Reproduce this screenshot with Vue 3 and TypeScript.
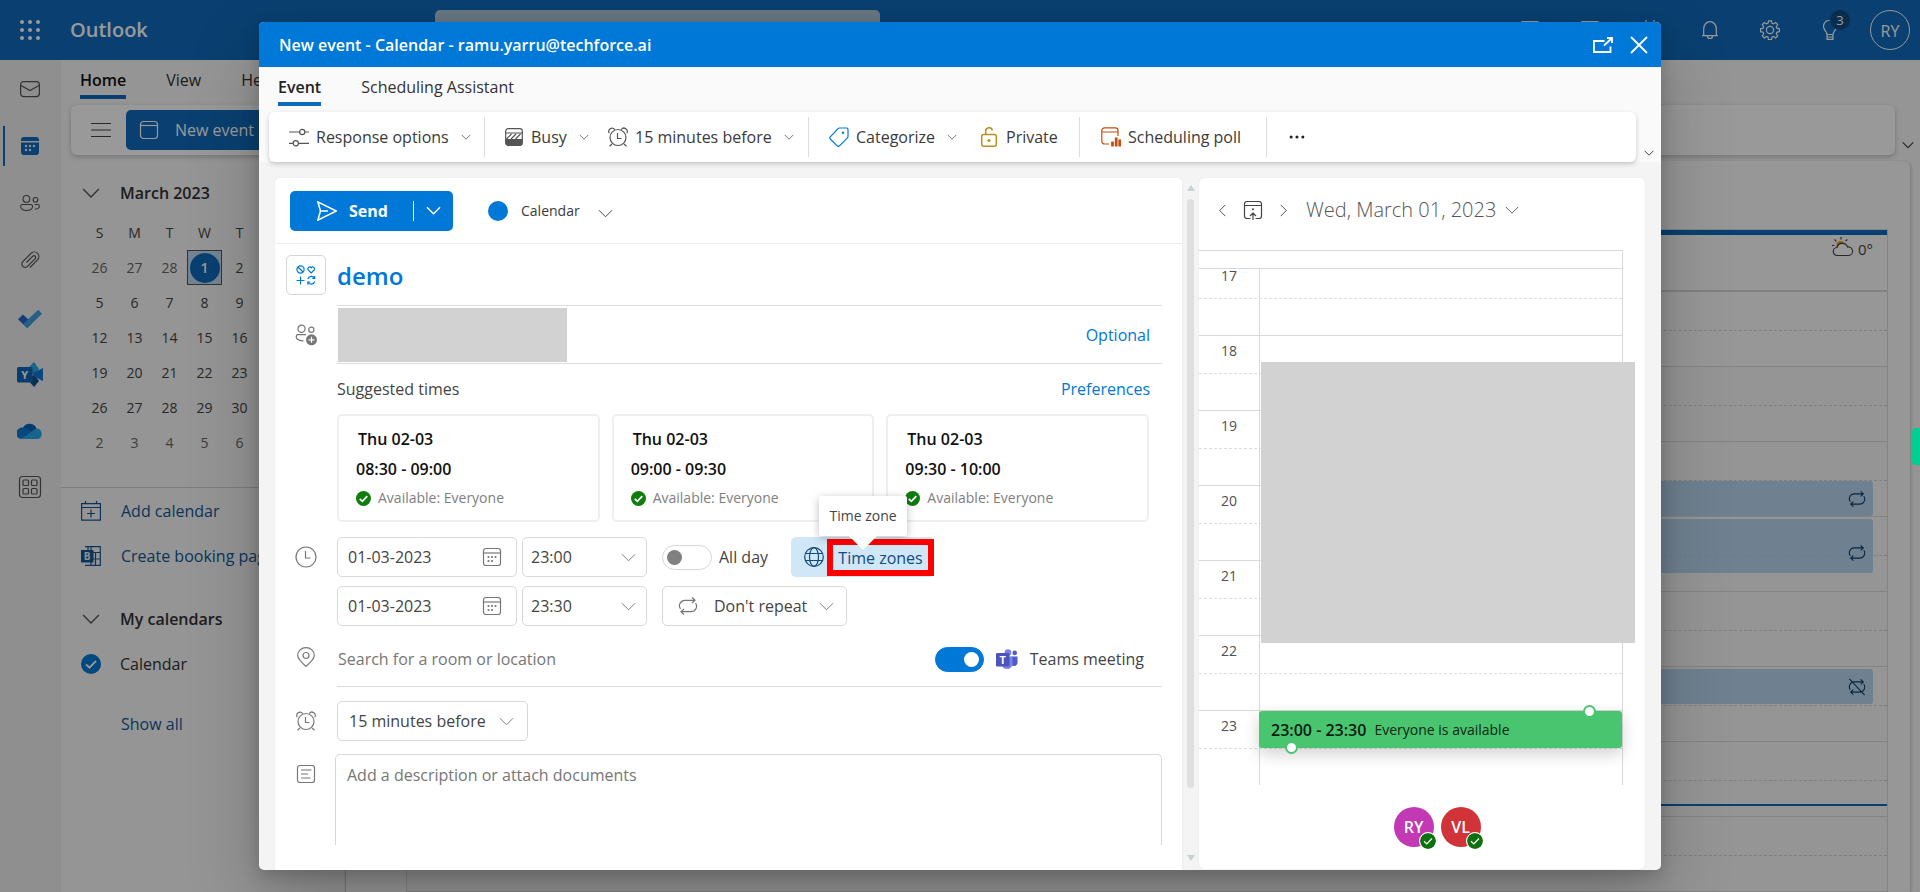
<script setup lang="ts">
import { ref } from 'vue'

interface Slot { day: string; time: string }

const railApps = ['mail', 'calfill', 'people', 'clip']
const ribbonTabs = ['Home', 'View', 'Help']
const weekDays = ['S', 'M', 'T', 'W', 'T', 'F', 'S']
const weeks: number[][] = [
  [26, 27, 28, 1, 2, 3, 4],
  [5, 6, 7, 8, 9, 10, 11],
  [12, 13, 14, 15, 16, 17, 18],
  [19, 20, 21, 22, 23, 24, 25],
  [26, 27, 28, 29, 30, 31, 1],
  [2, 3, 4, 5, 6, 7, 8],
]
const headerIcons = ['note', 'note', 'day']
const slots: Slot[] = [
  { day: 'Thu 02-03', time: '08:30 - 09:00' },
  { day: 'Thu 02-03', time: '09:00 - 09:30' },
  { day: 'Thu 02-03', time: '09:30 - 10:00' },
]
const hours = [17, 18, 19, 20, 21, 22, 23]
const attendees = [
  { initials: 'RY', tone: 'magenta' },
  { initials: 'VL', tone: 'red' },
]

const subject = ref('demo')
const startDate = ref('01-03-2023')
const endDate = ref('01-03-2023')
const startTime = ref('23:00')
const endTime = ref('23:30')
const allDay = ref(false)
const teams = ref(true)
const reminder = ref('15 minutes before')
const room = ref('')
const notes = ref('')
</script>

<template>
  <div class="page">
    <svg class="defs" aria-hidden="true">
      <symbol id="i-down" viewBox="0 0 16 16"><path d="M1 4.5l7 7 7-7" /></symbol>
      <symbol id="i-left" viewBox="0 0 16 16"><path d="M11 2L5 8l6 6" /></symbol>
      <symbol id="i-right" viewBox="0 0 16 16"><path d="M5 2l6 6-6 6" /></symbol>
      <symbol id="i-mail" viewBox="0 0 20 20"><rect x=".6" y="2.6" width="18.8" height="15" rx="3" /><path d="M1 6.5l9 5 9-5" /></symbol>
      <symbol id="i-calfill" viewBox="0 0 20 20">
        <path class="solid" d="M1 5V4a3 3 0 0 1 3-3h12a3 3 0 0 1 3 3v1zM1 6.500h18V16a3 3 0 0 1-3 3H4a3 3 0 0 1-3-3z" />
        <g class="dots-light"><circle cx="6" cy="10" r="1.200" /><circle cx="10" cy="10" r="1.200" /><circle cx="14" cy="10" r="1.200" /><circle cx="6" cy="14" r="1.200" /><circle cx="10" cy="14" r="1.200" /></g>
      </symbol>
      <symbol id="i-people" viewBox="0 0 22 20"><circle cx="7" cy="5.500" r="3.700" /><circle cx="17" cy="6.500" r="2.600" /><path d="M2.500 11.700h9.500a1.800 1.800 0 0 1 1.800 1.800c0 3-2.800 4.700-6.500 4.700S.700 16.500.7 13.500a1.800 1.800 0 0 1 1.800-1.800zM16 11.700h3.700a1.600 1.600 0 0 1 1.600 1.600c0 2.400-2 3.500-4.700 3.400" /></symbol>
      <symbol id="i-clip" viewBox="0 0 20 20"><path d="M6.500 12.500l6.300-6.300a1.700 1.700 0 0 1 2.400 2.400l-7.700 7.700a3.300 3.300 0 0 1-4.700-4.700l8.400-8.400a4.600 4.600 0 0 1 6.500 6.500L10 17.500" /></symbol>
      <symbol id="i-menu" viewBox="0 0 20 20"><path d="M0 3.500h20M0 10h20M0 16.500h20" /></symbol>
      <symbol id="i-cal" viewBox="0 0 20 20"><rect x="1.500" y="1.500" width="17" height="17" rx="3" /><path d="M1.500 5.500h17" /></symbol>
      <symbol id="i-caldots" viewBox="0 0 20 20"><rect x="1.500" y="1.500" width="17" height="17" rx="2.500" /><path d="M1.500 6h17" /><g class="dots"><circle cx="6.500" cy="10" r="1.100" /><circle cx="10" cy="10" r="1.100" /><circle cx="13.500" cy="10" r="1.100" /><circle cx="6.500" cy="14" r="1.100" /><circle cx="10" cy="14" r="1.100" /></g></symbol>
      <symbol id="i-caladd" viewBox="0 0 20 20"><path d="M.6 2.600h18.800v16.500H.6zM.6 6.500h18.800M4.500 0v2.500M15.500 0v2.500M10 8.500v8M6 12.500h8" /></symbol>
      <symbol id="i-note" viewBox="0 0 20 20"><rect x="1.500" y="1.500" width="17" height="17" rx="1" /></symbol>
      <symbol id="i-day" viewBox="0 0 20 20"><rect x="1.500" y="2.500" width="17" height="16" rx="1" /><path d="M6 0v5M14 0v5" /></symbol>
      <symbol id="i-bell" viewBox="0 0 20 20"><path d="M3.700 15.500V8.700a6.300 7 0 0 1 12.600 0v6.800M2 15.700h16M7.500 16.200a2.500 2.300 0 0 0 5 0" /></symbol>
      <symbol id="i-gear" viewBox="0 0 20 20"><circle cx="10" cy="10" r="3.600" /><path d="M8.500.8h3l.5 2.500 1.500.6 2.200-1.400 2 2-1.400 2.200.6 1.500 2.500.5v3l-2.500.5-.6 1.500 1.400 2.200-2 2-2.200-1.400-1.500.6-.5 2.500h-3l-.5-2.500-1.500-.6-2.200 1.400-2-2 1.400-2.200-.6-1.500-2.500-.5v-3l2.500-.5.600-1.500L2.300 4.500l2-2 2.200 1.400L8 3.300z" /></symbol>
      <symbol id="i-bulb" viewBox="0 0 20 20"><path d="M7 14.500c0-3-3.500-4.500-3.500-8a6.500 6.500 0 0 1 13 0c0 3.500-3.500 5-3.500 8zM7 14.500v4.800h6v-4.800M7 17h6" /></symbol>
      <symbol id="i-search" viewBox="0 0 20 20"><circle cx="12" cy="8" r="5.500" /><path d="M8 12l-6 6" /></symbol>
      <symbol id="i-weather" viewBox="0 0 22 20"><circle cx="8.500" cy="8" r="4" fill="#e8a400" stroke="none" /><path d="M9 0v2.500M2.500 2.500L4.300 4.300M15.300 2.500L13.500 4M0 8.500h2.500" /><path fill="#fff" d="M5.500 18.500a4 4 0 0 1-.5-8 5.500 5.500 0 0 1 10.500-.5 4.300 4.300 0 0 1 1.500 8.500z" /></symbol>
      <symbol id="i-repeat" viewBox="0 0 20 20"><path d="M14 1.500l3 2.800-3 2.700M16.500 4.300H7A5.500 5.500 0 0 0 2.500 13M6 18.500l-3-2.800L6 13M3.500 15.700H13A5.500 5.500 0 0 0 17.500 7" /></symbol>
      <symbol id="i-repeatoff" viewBox="0 0 20 20"><path d="M14 1.500l3 2.800-3 2.700M16.500 4.300H7A5.500 5.500 0 0 0 2.500 13M6 18.500l-3-2.800L6 13M3.500 15.700H13A5.500 5.500 0 0 0 17.500 7M1.500 1l17 18" /></symbol>
      <symbol id="i-popout" viewBox="0 0 20 16"><path d="M11.500 4H1v11h16.500V9.500M11 8.500L18.500 1.500M14 1h5v5" /></symbol>
      <symbol id="i-close" viewBox="0 0 18 18"><path d="M1 1l16 16M17 1L1 17" /></symbol>
      <symbol id="i-sliders" viewBox="0 0 20 20"><path d="M0 5h10.500M16 5h4M0 16.300h4M9.500 16.300H20" /><circle cx="13.200" cy="5" r="2.600" /><circle cx="6.800" cy="16.300" r="2.600" /></symbol>
      <symbol id="i-busy" viewBox="0 0 20 20"><rect x="1.700" y="1.700" width="16.600" height="16.600" rx="2.500" /><path d="M1.700 6h16.600M2.500 12l5-5M7 12l5-5M11.500 12l5-5" /><path class="solid" d="M1.500 12h17v4a2.500 2.500 0 0 1-2.500 2.500H4A2.500 2.500 0 0 1 1.500 16z" /></symbol>
      <symbol id="i-alarm" viewBox="0 0 20 20"><circle cx="10" cy="10.500" r="8" /><path d="M9.500 6v5.500h4M1.200 6.300A3.300 3.300 0 1 1 6.800 2.700M18.800 6.300a3.300 3.300 0 1 0-5.600-3.600M1.500 19.300L4 17M18.500 19.300L16 17" /></symbol>
      <symbol id="i-tag" viewBox="0 0 20 20"><path d="M10.500 1h7A1.500 1.500 0 0 1 19 2.500v7a2 2 0 0 1-.6 1.400l-7.700 7.700a2 2 0 0 1-2.800 0L1.300 12a1.500 1.500 0 0 1 0-2.200L9 1.600A2 2 0 0 1 10.500 1z" /><circle class="solid" cx="14" cy="5.700" r="1.200" /></symbol>
      <symbol id="i-lock" viewBox="0 0 20 20"><rect x="2.700" y="7.500" width="14.600" height="11.700" rx="2" /><path d="M6.700 7.500V4.200a3.400 3.400 0 0 1 6.700-.8" /><circle class="solid" cx="10" cy="13.400" r="1.500" /></symbol>
      <symbol id="i-poll" viewBox="0 0 20 20"><path d="M8 17H3.500A2.700 2.700 0 0 1 .8 14.300V3.500A2.700 2.700 0 0 1 3.500.8h10.800A2.700 2.700 0 0 1 17 3.500V9M.8 5H17" /><path stroke-width="2.700" d="M11.500 14.500v5M15.200 10.500v9M18.700 12.500v7" /></symbol>
      <symbol id="i-more" viewBox="0 0 20 20"><g class="dots"><circle cx="3.500" cy="10" r="1.700" /><circle cx="10" cy="10" r="1.700" /><circle cx="16.500" cy="10" r="1.700" /></g></symbol>
      <symbol id="i-send" viewBox="0 0 20 20"><path d="M.8.800L19.300 10 .8 19.200 3.500 10zM3.500 10H11" /></symbol>
      <symbol id="i-charm" viewBox="0 0 20 20"><circle cx="4.500" cy="4.500" r="3.600" /><path d="M2 2l5 5M15.200 8L12 4.700a1.900 1.900 0 0 1 3.200-2 1.900 1.900 0 0 1 3.200 2zM4.500 11.500v8M.5 15.500h8M11.800 14a3.700 3.700 0 0 1 6.700-.8M18.700 11v2.500h-2.500M18.700 16.500a3.700 3.700 0 0 1-6.700.800M11.800 19.500V17h2.500" /></symbol>
      <symbol id="i-invite" viewBox="0 0 22 22"><circle cx="6.500" cy="4.800" r="3.600" /><circle cx="16.300" cy="5.800" r="2.600" /><path d="M11 10.700H2.200c-2.600 3 .5 6.500 6.300 6.200" /><circle class="solid" cx="16.500" cy="15.800" r="5.500" /><path class="light" d="M16.500 12.800v6M13.500 15.800h6" /></symbol>
      <symbol id="i-clock" viewBox="0 0 22 22"><circle cx="11" cy="11" r="10" /><path d="M10.500 5v7h5" /></symbol>
      <symbol id="i-globe" viewBox="0 0 20 20"><circle cx="10" cy="10" r="9.300" /><ellipse cx="10" cy="10" rx="4.500" ry="9.300" /><path d="M1.500 6.500h17M1.500 13.500h17" /></symbol>
      <symbol id="i-pin" viewBox="0 0 20 20"><path d="M10 19.300C6 16 1.700 12.500 1.700 8.300a8.300 7.700 0 0 1 16.600 0c0 4.200-4.300 7.700-8.300 11z" /><circle cx="10" cy="8.500" r="3" /></symbol>
      <symbol id="i-notes" viewBox="0 0 20 20"><rect x="1.500" y="1.500" width="17" height="17" rx="2.500" /><path d="M5 6h10.500M5 10h7M5 14h9.500" /></symbol>
      <symbol id="i-today" viewBox="0 0 20 20"><path d="M7.500 18.500H4A2.500 2.500 0 0 1 1.500 16V4A2.500 2.500 0 0 1 4 1.500h12A2.500 2.500 0 0 1 18.500 4v12a2.500 2.500 0 0 1-2.500 2.500h-3.500M1.500 5.500h17M10 20v-6.500M7 16l3-3 3 3" /><circle class="solid" cx="10" cy="9.200" r="1" /></symbol>
      <symbol id="i-ok" viewBox="0 0 16 16"><circle class="solid" cx="8" cy="8" r="8" /><path class="light" d="M4 8.300l2.800 2.700L12 5.500" /></symbol>
    </svg>

    <div class="app">
      <header class="topbar">
        <button class="waffle" aria-label="App launcher"><i v-for="n in 9" :key="n"></i></button>
        <a class="brand" href="#">Outlook</a>
        <div class="search">
          <svg class="i s20"><use href="#i-search" /></svg>
          <input type="search" aria-label="Search" />
        </div>
        <nav class="top-actions" aria-label="Account">
          <button v-for="(n, k) in headerIcons" :key="k" :aria-label="n"><svg class="i s20"><use :href="'#i-' + n" /></svg></button>
          <button aria-label="Notifications"><svg class="i s20"><use href="#i-bell" /></svg></button>
          <button aria-label="Settings"><svg class="i s20"><use href="#i-gear" /></svg></button>
          <button aria-label="Tips"><svg class="i s20"><use href="#i-bulb" /></svg><span class="count">3</span></button>
          <button aria-label="Account manager"><span class="me">RY</span></button>
        </nav>
      </header>

      <div class="shell">
        <nav class="rail" aria-label="Apps">
          <a v-for="n in railApps" :key="n" href="#" :class="{ current: n === 'calfill' }" :aria-label="n"><svg class="i s20"><use :href="'#i-' + n" /></svg></a>
          <div class="rail-more">
            <a href="#" aria-label="To Do">
              <svg class="i s24 logo" viewBox="0 0 24 20"><path fill="#2766c8" d="M5 5.500L0 10.300 9.200 19l5-5z" /><path fill="#3f9fe0" d="M20.200.8l3.800 4L9.200 19l-4-4z" /></svg>
            </a>
            <a href="#" aria-label="Yammer">
              <svg class="i s26 logo" viewBox="0 0 26 26"><path fill="#28a8ea" d="M17 0l5 7-5 7-6-8z" /><path fill="#105292" d="M17 12l5 7-5 6-6-7z" /><path fill="#1378d4" d="M26 6v13l-10-5V11z" /><rect fill="#0f66b8" x="0" y="5" width="15.500" height="15.500" rx="1.500" /><text x="7.700" y="17" text-anchor="middle" class="logo-letter">Y</text></svg>
            </a>
            <a href="#" aria-label="OneDrive">
              <svg class="i s26 logo" viewBox="0 0 26 18"><path fill="#0364b8" d="M6 5.500a7.500 7.500 0 0 1 13.500 1l-5 4L6 8z" /><path fill="#0c79d2" d="M4 17a5.700 5.700 0 0 1 2-11.300 7 7 0 0 1 4 1.200l7 4.300L8 16z" /><path fill="#28a8ea" d="M4 17l15-10.500a5.400 5.400 0 0 1 2 10.500z" /></svg>
            </a>
            <a href="#" aria-label="More apps">
              <svg class="i s24" viewBox="0 0 24 24"><rect x="1.500" y="1.500" width="21" height="21" rx="3" /><rect x="5" y="5" width="5.500" height="5.500" rx="1" /><rect x="13.500" y="5" width="5.500" height="5.500" rx="1" /><rect x="5" y="13.500" width="5.500" height="5.500" rx="1" /><rect x="13.500" y="13.500" width="5.500" height="5.500" rx="1" /></svg>
            </a>
          </div>
        </nav>

        <div class="workspace">
          <div class="ribbon-tabs">
            <button v-for="(t, k) in ribbonTabs" :key="t" :class="{ on: k === 0 }">{{ t }}</button>
          </div>
          <div class="ribbon-row">
            <div class="ribbon">
              <button class="menu" aria-label="Toggle pane"><svg class="i s20"><use href="#i-menu" /></svg></button>
              <button class="new"><svg class="i s20"><use href="#i-cal" /></svg>New event</button>
            </div>
            <button class="expand" aria-label="Ribbon options"><svg class="i s12"><use href="#i-down" /></svg></button>
          </div>

          <div class="columns">
            <aside class="side">
              <button class="month"><svg class="i s18"><use href="#i-down" /></svg>March 2023</button>
              <table class="mini">
                <thead><tr><th v-for="(d, k) in weekDays" :key="k">{{ d }}</th></tr></thead>
                <tbody>
                  <tr v-for="(w, r) in weeks" :key="r">
                    <td v-for="(d, c) in w" :key="c" :class="{ today: r === 0 && d === 1, out: (r === 0 && d > 20) || r === 5 }"><span>{{ d }}</span></td>
                  </tr>
                </tbody>
              </table>
              <div class="side-links">
                <a href="#"><svg class="i s20"><use href="#i-caladd" /></svg>Add calendar</a>
                <a href="#">
                  <svg class="i s20" viewBox="0 0 20 20"><path d="M4 .7h15.300v18.600H4M10 .7v18.600M14.500 6.500v12.800M7 .7V5M10 6.500h9M12 13h7" /><path class="solid" d="M0 4h12.500v12.500H0z" /><text x="6.200" y="14" text-anchor="middle" class="logo-letter dim">B</text></svg>Create booking page
                </a>
              </div>
              <button class="group"><svg class="i s18"><use href="#i-down" /></svg>My calendars</button>
              <button class="group plain"><svg class="i s20 blue"><use href="#i-ok" /></svg>Calendar</button>
              <a class="show-all" href="#">Show all</a>
            </aside>

            <main class="board">
              <div class="board-tools"></div>
              <div class="board-grid">
                <div class="gutter"></div>
                <div class="day">
                  <div class="day-head"><svg class="i weather"><use href="#i-weather" /></svg>0°</div>
                  <div v-for="n in 8" :key="n" class="hour" :class="{ off: n > 1 }"></div>
                  <div class="appt a1"><svg class="i s18"><use href="#i-repeat" /></svg></div>
                  <div class="appt a2"><svg class="i s18"><use href="#i-repeat" /></svg></div>
                  <div class="appt a3"><svg class="i s18"><use href="#i-repeatoff" /></svg></div>
                  <div class="now"></div>
                </div>
              </div>
            </main>
          </div>
        </div>
      </div>
    </div>

    <div class="scrim"></div>

    <section class="modal" role="dialog" aria-label="New event">
      <header class="titlebar">
        <h1>New event - Calendar - ramu.yarru@techforce.ai</h1>
        <button aria-label="Open in new window"><svg class="i popout"><use href="#i-popout" /></svg></button>
        <button aria-label="Close"><svg class="i s18"><use href="#i-close" /></svg></button>
      </header>

      <div class="command-area">
        <div class="tabs">
          <button class="on">Event</button>
          <button>Scheduling Assistant</button>
        </div>
        <div class="command-row">
          <div class="commands">
            <button class="c1"><svg class="i s20"><use href="#i-sliders" /></svg>Response options<svg class="i s10"><use href="#i-down" /></svg></button>
            <hr />
            <button class="c2"><svg class="i s20"><use href="#i-busy" /></svg>Busy<svg class="i s10"><use href="#i-down" /></svg></button>
            <button class="c3"><svg class="i s20"><use href="#i-alarm" /></svg>15 minutes before<svg class="i s10"><use href="#i-down" /></svg></button>
            <hr />
            <button class="c4"><svg class="i s20 tag"><use href="#i-tag" /></svg>Categorize<svg class="i s10"><use href="#i-down" /></svg></button>
            <button class="c5"><svg class="i s20 lock"><use href="#i-lock" /></svg>Private</button>
            <hr />
            <button class="c6"><svg class="i s20 poll"><use href="#i-poll" /></svg>Scheduling poll</button>
            <hr />
            <button class="c7" aria-label="More options"><svg class="i s18"><use href="#i-more" /></svg></button>
          </div>
          <button class="expand low" aria-label="Ribbon options"><svg class="i s10"><use href="#i-down" /></svg></button>
        </div>
      </div>

      <div class="body">
        <form class="form" @submit.prevent>
          <div class="send-row">
            <div class="send">
              <button type="submit"><svg class="i s20"><use href="#i-send" /></svg>Send</button>
              <button type="button" class="send-more" aria-label="Send options"><svg class="i s15"><use href="#i-down" /></svg></button>
            </div>
            <button type="button" class="pick"><span class="dot"></span>Calendar<svg class="i s15"><use href="#i-down" /></svg></button>
          </div>

          <div class="row subject">
            <button type="button" class="charm" aria-label="Add a charm"><svg class="i s20"><use href="#i-charm" /></svg></button>
            <div class="field"><input v-model="subject" aria-label="Event title" /></div>
          </div>

          <div class="row people">
            <svg class="i s22"><use href="#i-invite" /></svg>
            <div class="field"><span class="redacted"></span><a href="#">Optional</a></div>
          </div>

          <div class="row">
            <span></span>
            <div class="suggest">
              <div class="suggest-head"><span>Suggested times</span><a href="#">Preferences</a></div>
              <div class="slots">
                <button v-for="s in slots" :key="s.time" type="button">
                  <b class="slot-day">{{ s.day }}</b>
                  <b>{{ s.time }}</b>
                  <small><svg class="i s15 green"><use href="#i-ok" /></svg>Available: Everyone</small>
                </button>
              </div>
            </div>
          </div>

          <div class="row when">
            <svg class="i s22"><use href="#i-clock" /></svg>
            <div class="line">
              <label class="box date"><input v-model="startDate" aria-label="Start date" /><svg class="i s20"><use href="#i-caldots" /></svg></label>
              <label class="box time"><select v-model="startTime" aria-label="Start time"><option>23:00</option><option>23:30</option></select><svg class="i s15"><use href="#i-down" /></svg></label>
              <label class="allday"><input v-model="allDay" class="switch" type="checkbox" />All day</label>
              <button type="button" class="zones">
                <svg class="i s20"><use href="#i-globe" /></svg><span>Time zones</span>
                <em role="tooltip">Time zone</em>
              </button>
            </div>
          </div>
          <div class="row when end">
            <span></span>
            <div class="line">
              <label class="box date"><input v-model="endDate" aria-label="End date" /><svg class="i s20"><use href="#i-caldots" /></svg></label>
              <label class="box time"><select v-model="endTime" aria-label="End time"><option>23:00</option><option>23:30</option></select><svg class="i s15"><use href="#i-down" /></svg></label>
              <button type="button" class="box repeat"><svg class="i s20"><use href="#i-repeat" /></svg>Don't repeat<svg class="i s15"><use href="#i-down" /></svg></button>
            </div>
          </div>

          <div class="row place">
            <svg class="i s20"><use href="#i-pin" /></svg>
            <div class="field">
              <input v-model="room" placeholder="Search for a room or location" aria-label="Location" />
              <label>
                <input v-model="teams" class="switch" type="checkbox" />
                <svg class="i teams logo" viewBox="0 0 22 20"><circle cx="12" cy="3.500" r="3.300" fill="#7b83eb" /><circle cx="18.700" cy="3.900" r="2.300" fill="#5059c9" /><path fill="#5059c9" d="M15 7.500h6.500v6.500a3.500 3.500 0 0 1-6 2z" /><path fill="#7b83eb" d="M5.500 7.500h11v7a5.500 5.500 0 0 1-11 0z" /><rect fill="#4b53bc" x="0" y="4" width="13.500" height="13.500" rx="1.200" /><text x="6.800" y="14.500" text-anchor="middle" class="logo-letter">T</text></svg>
                Teams meeting
              </label>
            </div>
          </div>

          <div class="row remind">
            <svg class="i s20"><use href="#i-alarm" /></svg>
            <label class="box"><select v-model="reminder" aria-label="Reminder"><option>15 minutes before</option></select><svg class="i s15"><use href="#i-down" /></svg></label>
          </div>

          <div class="row about">
            <svg class="i s20"><use href="#i-notes" /></svg>
            <textarea v-model="notes" placeholder="Add a description or attach documents" aria-label="Description"></textarea>
          </div>
        </form>

        <div class="scroller" aria-hidden="true"><i class="up"></i><i class="thumb"></i><i class="dn"></i></div>

        <aside class="agenda">
          <div class="agenda-head">
            <button aria-label="Previous day"><svg class="i s15"><use href="#i-left" /></svg></button>
            <button aria-label="Today"><svg class="i s20"><use href="#i-today" /></svg></button>
            <button aria-label="Next day"><svg class="i s15"><use href="#i-right" /></svg></button>
            <button class="when-day">Wed, March 01, 2023<svg class="i s14"><use href="#i-down" /></svg></button>
          </div>
          <div class="agenda-allday"></div>
          <div class="agenda-scroll">
            <div class="agenda-hours">
              <div v-for="h in hours" :key="h" class="agenda-hour"><span>{{ h }}</span></div>
              <div class="busy-block"></div>
              <div class="free">
                <b>23:00 - 23:30</b><span>Everyone is available</span>
                <i class="grip top"></i><i class="grip bottom"></i>
              </div>
            </div>
          </div>
          <div class="faces">
            <span v-for="a in attendees" :key="a.initials" class="face" :class="a.tone">{{ a.initials }}<svg class="i"><use href="#i-ok" /></svg></span>
          </div>
        </aside>
      </div>
    </section>

    <button class="side-tab" aria-label="Open assistant"></button>
  </div>
</template>

<style>
body { overflow: hidden; }
.solid, .dots { fill: currentColor; stroke: none; }
.dots-light { fill: #f0f0f0; stroke: none; }
.light { stroke: #fff; }
</style>

<style scoped>
* { box-sizing: border-box; }
.page { height: 100vh; position: relative; overflow: hidden; font: 16px/24px "Open Sans", "Noto Sans", sans-serif; color: #3b3a39; }
button, input, select, textarea { font: inherit; color: inherit; background: none; border: 0; padding: 0; margin: 0; outline: 0; }
button { display: inline-flex; align-items: center; white-space: nowrap; }
a { text-decoration: none; color: #0f6cbd; }
.defs { position: absolute; width: 0; height: 0; }
.i { fill: none; stroke: currentColor; stroke-width: 1.2; flex: none; display: block; width: 20px; height: 20px; }
.s10 { width: 10px; height: 10px; stroke-width: 1.6; }
.s12 { width: 12px; height: 12px; stroke-width: 1.6; }
.s14 { width: 14px; height: 14px; stroke-width: 1; }
.s15 { width: 15px; height: 15px; stroke-width: 1; }
.s18 { width: 18px; height: 18px; }
.s22 { width: 22px; height: 22px; }
.s24 { width: 24px; height: 24px; }
.s26 { width: 26px; height: 26px; }
.logo { stroke: none; }
.logo-letter { fill: #fff; stroke: none; font-weight: 700; font-size: 11px; }
.logo-letter.dim { fill: #f0f0f0; font-size: 10px; }
.green { color: #107c10; stroke-width: 1.8; }

.app { height: 100%; display: flex; flex-direction: column; background: #f8f8f8; }
.topbar { height: 60px; flex: none; background: #0f6cbd; display: flex; align-items: center; color: #fff; }
.waffle { width: 60px; height: 60px; padding-left: 20px; display: grid; grid-template-columns: repeat(3, 4px); grid-auto-rows: 4px; gap: 4px; align-content: center; }
.waffle i { width: 4px; height: 4px; border-radius: 50%; background: #fff; }
.brand { width: 375px; padding-left: 10px; font-size: 20px; font-weight: 600; color: #fff; }
.search { width: 445px; height: 40px; display: flex; align-items: center; padding-left: 20px; gap: 10px; background: #aec6da; border-radius: 5px; color: #222; }
.search input { flex: 1; min-width: 0; appearance: none; }
.top-actions { margin-left: auto; display: flex; }
.top-actions button { width: 60px; height: 60px; justify-content: center; position: relative; }
.count { position: absolute; left: 30px; top: 10px; width: 20px; height: 20px; border-radius: 50%; background: #0c4a80; font-size: 13px; line-height: 20px; }
.me { width: 40px; height: 40px; border: 1px solid #fff; border-radius: 50%; font-size: 16px; line-height: 40px; }

.shell { flex: 1; min-height: 0; display: grid; grid-template-columns: 61px minmax(0, 1fr); }
.rail { background: #eee; display: flex; flex-direction: column; color: #555; padding-right: 1px; }
.rail a { height: 57px; display: flex; align-items: center; justify-content: center; color: #555; }
.rail-more { margin-top: 3px; }
.rail-more a { height: 56px; }
.rail a.current { color: #0f6cbd; position: relative; }
.rail a.current::before { content: ""; position: absolute; left: 3px; top: 9px; width: 2px; height: 40px; background: #0f6cbd; }
.workspace { display: flex; flex-direction: column; min-height: 0; min-width: 0; }
.ribbon-tabs { height: 45px; flex: none; display: flex; gap: 40px; padding-left: 19px; }
.ribbon-tabs button { height: 39px; padding-top: 5px; border-bottom: 4px solid transparent; color: #333; }
.ribbon-tabs .on { font-weight: 600; border-color: #0f6cbd; color: #111; }
.ribbon-row { display: flex; padding-left: 10px; }
.ribbon { flex: 1; height: 50px; background: #fff; border-radius: 6px; box-shadow: 0 2px 5px rgba(0,0,0,.22); display: flex; align-items: center; padding-left: 20px; color: #444; }
.new { margin-left: 15px; height: 40px; width: 240px; border-radius: 5px; background: #0f6cbd; color: #fff; padding-left: 13px; gap: 16px; }
.expand { width: 25px; justify-content: center; padding: 30px 0 0; color: #444; }
.columns { flex: 1; min-height: 0; display: grid; grid-template-columns: 284px minmax(0, 1fr); }

.side { padding-top: 16px; color: #333; }
.month, .group { padding-left: 21px; gap: 20px; width: 100%; font-weight: 600; color: #333; }
.month { height: 44px; }
.month .i, .group .i { color: #555; }
.group { height: 45px; margin-top: 18px; }
.group.plain { font-weight: 400; margin-top: 0; padding-left: 20px; }
.group .i.blue { color: #0078d4; margin-right: -1px; stroke-width: 1.5; }
.mini { margin-left: 21px; width: 245px; border-collapse: collapse; table-layout: fixed; font-size: 14px; color: #444; }
.mini th, .mini td { height: 35px; padding: 0; text-align: center; font-weight: 400; line-height: 30px; }
.mini .out { color: #666; }
.mini .today { background: #c2dcf5; box-shadow: inset 0 0 0 1px #555; color: #fff; }
.mini .today span { display: block; width: 30px; height: 30px; margin: auto; border-radius: 50%; background: #0f6cbd; font-weight: 600; }
.side-links { margin-top: 27px; border-top: 1px solid #d0d0d0; }
.side-links a { height: 45px; display: flex; align-items: center; gap: 20px; padding-left: 20px; color: #12589a; white-space: nowrap; overflow: hidden; }
.show-all { display: block; margin-top: 16px; line-height: 45px; padding-left: 60px; color: #12589a; }

.board { margin: 6px 10px 0 0; background: #fcfcfc; border-left: 1px solid #ccc; border-radius: 6px 6px 0 0; box-shadow: 1px 1px 3px rgba(0,0,0,.2); overflow: hidden; }
.board-tools { height: 68px; }
.board-grid { display: grid; grid-template-columns: 60px minmax(0, 1fr); margin-right: 22px; }
.day { position: relative; border: solid #ddd; border-width: 1px 1px 0; }
.gutter { border-top: 1px solid #ddd; }
.day-head { height: 62px; border-top: 5px solid #0f6cbd; border-bottom: 2px solid #d8d8d8; display: flex; justify-content: flex-end; align-items: flex-start; gap: 4px; padding: 2px 14px 0 0; font-size: 15px; color: #444; }
.weather { width: 22px; height: 20px; }
.hour { height: 75px; border-bottom: 1px solid #dadada; }
.hour::before { content: ""; display: block; height: 38px; border-bottom: 1px dashed #d4d4d4; }
.hour.off { background: #f8f8f8; }
.appt { position: absolute; left: 0; right: 14px; height: 35px; border-radius: 3px; background: rgba(164,206,240,.75); color: #0e3c68; display: flex; justify-content: flex-end; align-items: center; padding-right: 7px; }
.a1 { top: 251px; }
.a2 { top: 289px; height: 54px; padding-top: 14px; }
.a3 { top: 439px; }
.now { position: absolute; left: 0; right: 0; top: 574px; height: 2px; background: #0f6cbd; }
.scrim { position: absolute; inset: 0; background: rgba(0,0,0,.4); }
.side-tab { position: absolute; right: 0; top: 428px; width: 8px; height: 37px; border-radius: 4px 0 0 4px; background: #00cf92; }

.modal { position: absolute; inset: 22px 259px; display: flex; flex-direction: column; background: #f4f4f4; border-radius: 5px; overflow: hidden; box-shadow: 0 32px 72px rgba(0,0,0,.22), 0 6px 18px rgba(0,0,0,.18); }
.titlebar { height: 45px; flex: none; background: #0078d7; color: #fff; display: flex; align-items: center; gap: 17px; padding: 0 13px 0 20px; }
.titlebar h1 { flex: 1; margin: 0; font-size: 16px; line-height: 24px; font-weight: 600; }
.titlebar .i { stroke-width: 1.8; }
.popout { width: 20px; height: 16px; }
.command-area { background: #fafafa; flex: none; }
.tabs { height: 45px; display: flex; gap: 40px; padding-left: 19px; }
.tabs button { height: 39px; padding-top: 5px; border-bottom: 4px solid transparent; color: #333; }
.tabs .on { font-weight: 600; border-color: #0f6cbd; color: #222; }
.command-row { display: flex; padding-left: 10px; }
.commands { flex: 1; height: 50px; display: flex; align-items: center; background: #fff; border-radius: 6px; box-shadow: 0 2px 5px rgba(0,0,0,.2); padding-left: 20px; }
.commands button { gap: 7px; }
.commands button .s10 { margin-left: 5px; color: #777; }
.commands .i { color: #555; }
.commands hr { width: 1px; height: 40px; margin: 0; border: 0; background: #ddd; }
.c1 { width: 195px; }
.c2 { margin-left: 19px; width: 104px; }
.c3 { width: 200px; }
.c4 { margin-left: 20px; width: 150px; }
.c5 { width: 100px; }
.c6 { margin-left: 21px; width: 165px; }
.c7 { margin-left: 21px; }
.commands .tag { color: #0078d7; }
.commands .lock { color: #b8901c; stroke-width: 1.5; }
.commands .poll { color: #c84c0c; }
.commands .c7 .i { color: #222; }
.expand.low { padding-top: 32px; }

.body { flex: 1; min-height: 0; padding: 16px 16px 0; display: grid; grid-template-columns: minmax(0, 907fr) 17px minmax(0, 446fr); }
.form { background: #fff; border-radius: 4px 4px 0 0; display: flex; flex-direction: column; min-height: 0; padding-bottom: 25px; box-shadow: 0 0 1px #ccc; }
.send-row { height: 66px; flex: none; border-bottom: 1px solid #ededed; display: flex; align-items: center; padding-left: 15px; gap: 35px; }
.send { display: flex; height: 40px; width: 163px; background: #0078d7; color: #fff; border-radius: 5px; font-weight: 700; align-items: center; }
.send button:first-child { flex: 1; padding-left: 27px; gap: 12px; }
.send .i { stroke-width: 1.5; }
.send-more { width: 40px; height: 20px; border-left: 1px solid #fff; justify-content: center; }
.pick { font-size: 14px; gap: 13px; }
.pick .i { margin-left: 5px; margin-top: 5px; }
.dot { width: 20px; height: 20px; border-radius: 50%; background: #0078d7; }
.row { display: grid; grid-template-columns: 62px minmax(0, 1fr); padding-right: 20px; align-items: center; flex: none; color: #444; }
.row > .i, .row > .charm { justify-self: center; color: #767676; }
.row > .charm { width: 40px; height: 40px; border: 1px solid #d6d6d6; border-radius: 5px; justify-content: center; color: #0078d7; }
.field { display: flex; align-items: center; justify-content: space-between; border-bottom: 1px solid #dcdcdc; padding-right: 12px; }
.row a { color: #0078d7; }
.subject .field { height: 62px; padding-top: 2px; }
.subject input { width: 100%; font-size: 24px; line-height: 32px; font-weight: 600; color: #0078d7; }
.people .field { height: 58px; }
.redacted { width: 229px; height: 54px; margin-left: 1px; background: #d2d2d2; }
.suggest-head { height: 50px; display: flex; justify-content: space-between; align-items: center; padding-right: 12px; }
.slots { display: grid; grid-template-columns: repeat(3, minmax(0, 1fr)); gap: 12px; padding-right: 13px; }
.slots button { height: 108px; border: 2px solid #efefef; border-radius: 5px; flex-direction: column; align-items: flex-start; justify-content: center; padding: 0 0 0 17px; gap: 6px; color: #111; }
.slots b { font-weight: 600; line-height: 24px; color: #111; }
.slots .slot-day { padding-left: 2px; }
.slots small { display: flex; align-items: center; gap: 7px; font-size: 14px; line-height: 22px; color: #808080; }
.when { margin-top: 15px; }
.when.end { margin-top: 9px; }
.line { display: flex; align-items: center; }
.box { height: 40px; border: 1px solid #d9d9d9; border-radius: 5px; display: flex; align-items: center; }
.box .i { color: #767676; }
.box select { appearance: none; flex: 1; min-width: 0; }
.date { width: 180px; padding: 0 14px 0 10px; margin-right: 5px; }
.date input { flex: 1; min-width: 0; }
.time { width: 125px; padding: 0 10px 0 8px; margin-right: 15px; }
.allday { display: flex; align-items: center; gap: 7px; }
.switch { appearance: none; width: 50px; height: 25px; border: 1px solid #d6d6d6; border-radius: 13px; display: flex; align-items: center; padding: 0 4px; }
.switch::before { content: ""; width: 15px; height: 15px; border-radius: 50%; background: #808080; }
.switch:checked { width: 49px; background: #0078d7; border-color: #0078d7; justify-content: flex-end; }
.switch:checked::before { background: #fff; }
.zones { position: relative; margin-left: 23px; height: 40px; width: 143px; border-radius: 5px; background: #d0e7f8; color: #124b80; padding-left: 13px; gap: 3px; }
.zones span { flex: 1; height: 37px; line-height: 26px; border: 6px solid #f00; text-align: center; }
.zones em { position: absolute; left: 28px; bottom: 41px; width: 88px; height: 40px; border-radius: 2px; background: #fff; box-shadow: 0 2px 8px rgba(0,0,0,.25); font-style: normal; font-size: 14px; line-height: 40px; text-align: center; color: #444; }
.zones em::after { content: ""; position: absolute; left: 30px; top: 40px; border: 14px solid transparent; border-top-color: #fff; border-bottom: 0; }
.repeat { width: 185px; padding-left: 15px; color: #444; }
.repeat .i:first-child { margin-right: 16px; }
.repeat .i:last-child { margin-left: 12px; }
.place .field { height: 61px; padding: 6px 18px 0 0; }
.place .field > input { flex: 1; min-width: 0; padding-left: 1px; }
.place input::placeholder, .about textarea::placeholder { color: #767676; opacity: 1; }
.place label { display: flex; align-items: center; gap: 12px; }
.teams { width: 22px; height: 20px; }
.remind { margin-top: 14px; }
.remind .box { width: 191px; padding: 0 13px 0 11px; }
.about { flex: 1; min-height: 0; margin-top: 13px; align-items: start; }
.about > .i { margin-top: 10px; }
.about textarea { height: 100%; width: auto; margin-left: -2px; border: 1px solid #d9d9d9; border-bottom: 0; border-radius: 5px 5px 0 0; padding: 8px 11px; resize: none; }
.scroller { display: flex; flex-direction: column; align-items: center; justify-content: space-between; padding: 7px 0 9px; }
.scroller i { display: block; }
.thumb { width: 7px; flex: 1; margin: 8px 0 67px; border-radius: 4px; background: #dfdfdf; }
.up, .dn { border: 4px solid transparent; border-bottom: 6px solid #c8d0d3; border-top: 0; }
.dn { border-bottom: 0; border-top: 6px solid #c8d0d3; }

.agenda { background: #fff; border-radius: 5px; margin-bottom: 1px; display: flex; flex-direction: column; min-height: 0; box-shadow: 0 0 1px #ccc; color: #505050; }
.agenda-head { height: 72px; flex: none; display: flex; align-items: center; padding: 0 0 8px 16px; gap: 13px; color: #444; }
.when-day { font-size: 20px; font-weight: 300; line-height: 28px; gap: 9px; margin-left: 2px; color: #555; }
.agenda-allday { height: 18px; flex: none; margin-right: 22px; border: solid #d9d9d9; border-width: 1px 1px 0 0; }
.agenda-scroll { flex: none; overflow: hidden; position: relative; }
.agenda-scroll::before { content: ""; position: absolute; z-index: 1; left: 0; right: 22px; top: 0; height: 1px; background: #d9d9d9; }
.agenda-hours { margin-top: -8px; position: relative; }
.agenda-hour { height: 75px; margin-right: 22px; border: solid #d9d9d9; border-width: 1px 1px 0 0; position: relative; background: linear-gradient(#d9d9d9, #d9d9d9) 60px 0 / 1px 100% no-repeat; }
.agenda-hour::before { content: ""; display: block; height: 37px; border-bottom: 1px dashed #dedede; }
.agenda-hour span { position: absolute; left: 22px; top: 3px; font-size: 14px; }
.busy-block { position: absolute; left: 62px; right: 10px; top: 102px; height: 281px; background: #d2d2d2; }
.free { position: absolute; left: 60px; right: 23px; top: 451px; height: 37px; border-radius: 3px; background: #49c570; color: #0c2614; display: flex; align-items: center; gap: 8px; padding-left: 12px; box-shadow: 0 6px 16px rgba(0,0,0,.18); font-size: 14px; }
.free b { font-size: 16px; font-weight: 600; color: #0a1a10; }
.grip { position: absolute; width: 13px; height: 13px; border: 2px solid #49c570; border-radius: 50%; background: #fff; }
.grip.top { top: -6px; right: 26px; }
.grip.bottom { bottom: -6px; left: 26px; }
.faces { flex: 1; display: flex; align-items: center; justify-content: center; gap: 7px; padding-left: 30px; }
.face { position: relative; width: 40px; height: 40px; border-radius: 50%; color: #fff; font-weight: 600; line-height: 40px; text-align: center; }
.magenta { background: #c239b3; }
.face.red { background: #d13438; }
.face .i { position: absolute; left: 25px; top: 25px; width: 18px; height: 18px; border: 1px solid #fff; border-radius: 50%; background: #fff; color: #0e700e; }
</style>
